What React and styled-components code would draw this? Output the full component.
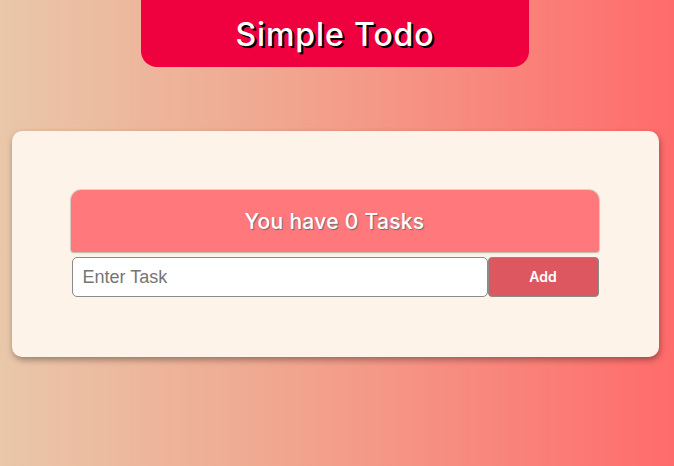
import React from "react";
import styled, { createGlobalStyle } from "styled-components";

const Global = createGlobalStyle`
  html, body { margin: 0; padding: 0; height: 100%; }
  body {
    background: linear-gradient(90deg, #e9c7a9 0%, #f0a891 40%, #ff6b6b 100%);
    min-height: 466px;
    font-family: "Inter", "Liberation Sans", sans-serif;
  }
`;

const Page = styled.div`
  display: flex;
  flex-direction: column;
  align-items: center;
  height: 466px;
  padding-right: 4px;
`;

const Banner = styled.h1`
  margin: 0;
  width: 388px;
  height: 67px;
  box-sizing: border-box;
  background: #ef003f;
  border-radius: 0 0 16px 16px;
  display: flex;
  align-items: center;
  justify-content: center;
  padding-top: 2px;
  color: #fff;
  font-family: "Inter", sans-serif;
  font-weight: 500;
  font-size: 32px;
  letter-spacing: 0.9px;
  text-shadow: 2px 2px 0 #000;
`;

const Card = styled.div`
  margin-top: 64px;
  width: 647px;
  box-sizing: border-box;
  background: #fef3e8;
  border-radius: 10px;
  box-shadow: 1px 3px 6px rgba(0, 0, 0, 0.35);
  padding: 59px 60px 60px 59px;
`;

const Counter = styled.div`
  height: 62px;
  box-sizing: border-box;
  background: #ff787c;
  border-radius: 10px 10px 3px 3px;
  box-shadow: 0 0 0 1px rgba(0, 0, 0, 0.12), 0 1px 2px rgba(0,0,0,0.15);
  display: flex;
  align-items: center;
  justify-content: center;
  color: #fff;
  font-family: "Inter", sans-serif;
  font-weight: 500;
  font-size: 21px;
  letter-spacing: 0.3px;
  text-shadow: 1px 1px 1px #6b6b6b;
`;

const Form = styled.form`
  display: flex;
  margin-top: 5px;
  padding-left: 1px;
`;

const Input = styled.input`
  width: 416px;
  height: 40px;
  box-sizing: border-box;
  border: 1px solid #8a8a8a;
  border-radius: 5px;
  background: #fff;
  padding: 0 10px;
  font-family: "Liberation Sans", Arial, sans-serif;
  font-size: 18px;
  outline: none;
  &::placeholder { color: #757575; }
`;

const Button = styled.button`
  width: 111px;
  height: 40px;
  box-sizing: border-box;
  border: 1px solid #8a8a8a;
  border-radius: 4px;
  background: #dd5760;
  color: #fff;
  font-family: "Inter", sans-serif;
  font-weight: 600;
  font-size: 14px;
  padding-bottom: 2px;
  cursor: pointer;
`;

export default function App() {
  return (
    <>
      <Global />
      <Page>
        <Banner>Simple Todo</Banner>
        <Card>
          <Counter>You have 0 Tasks</Counter>
          <Form onSubmit={(e) => e.preventDefault()}>
            <Input placeholder="Enter Task" />
            <Button type="submit">Add</Button>
          </Form>
        </Card>
      </Page>
    </>
  );
}
